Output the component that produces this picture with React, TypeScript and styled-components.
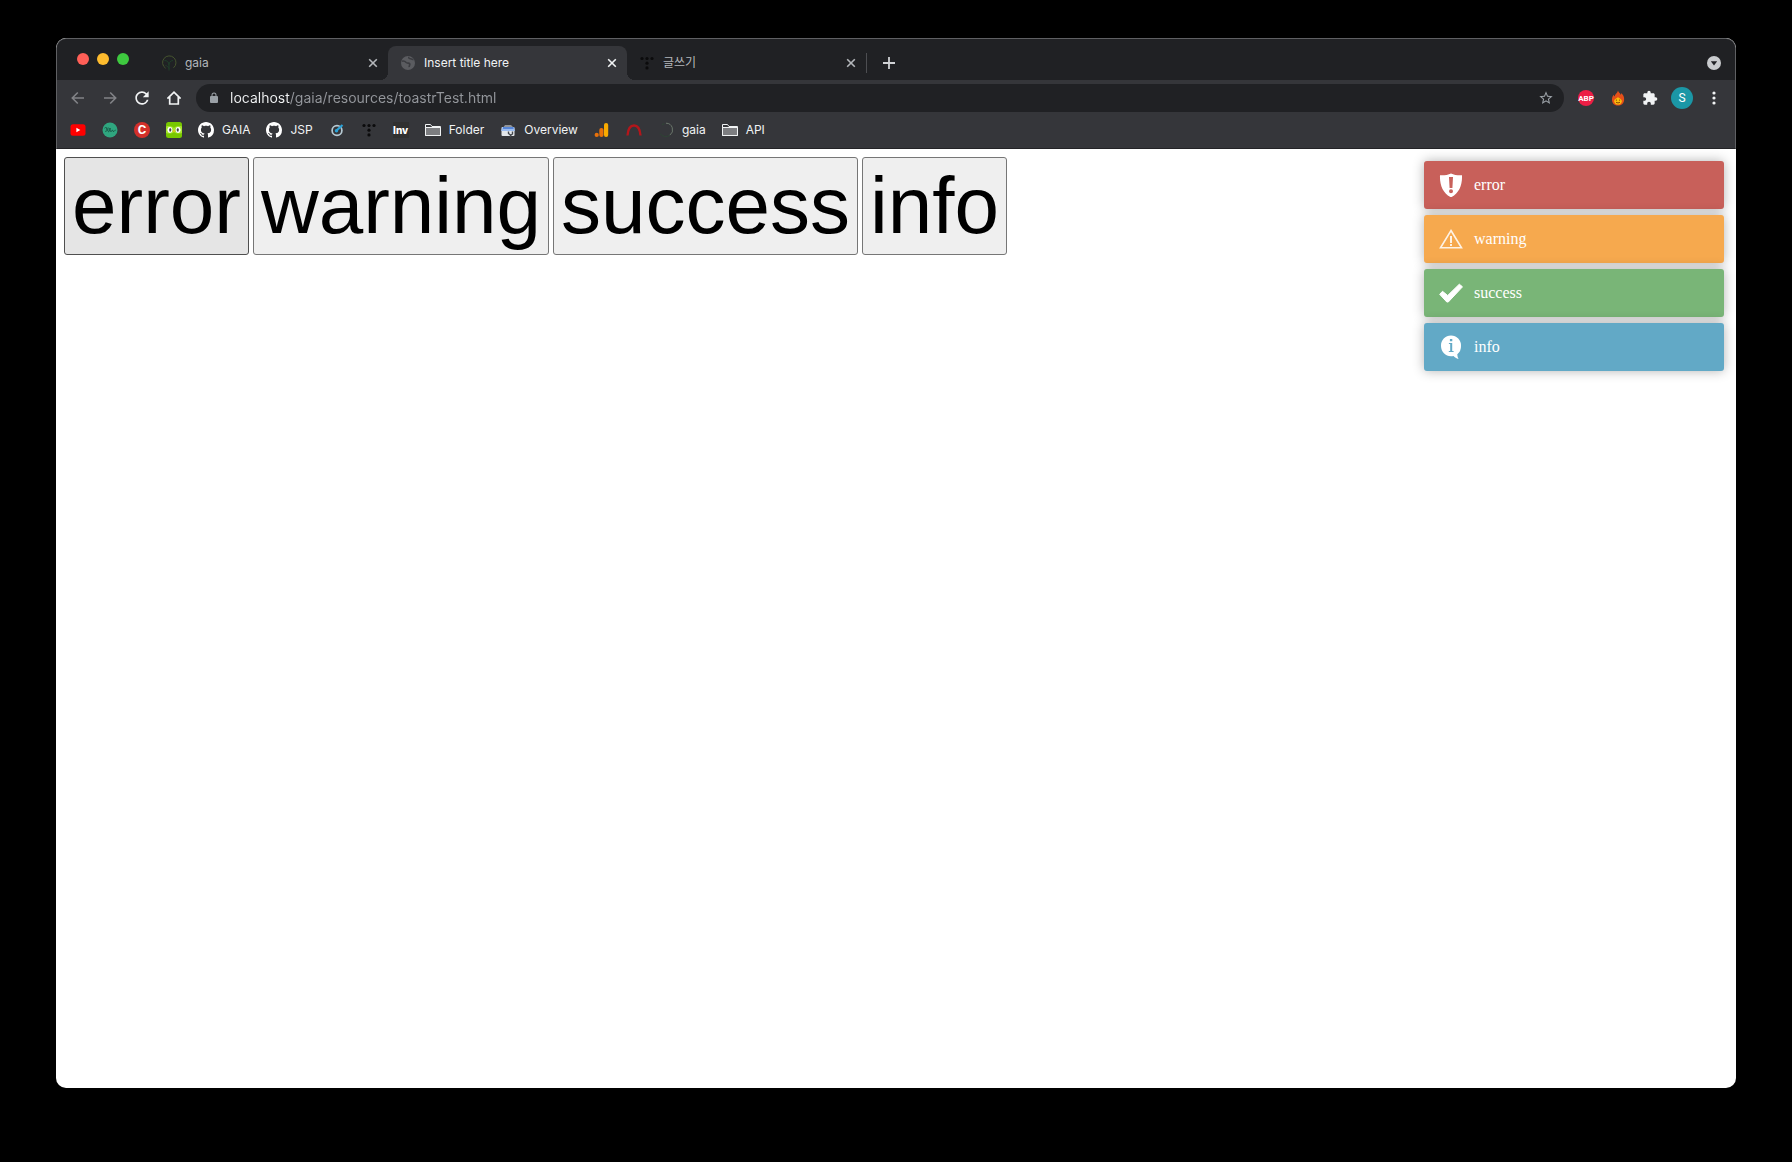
import React, { useState } from "react";
import styled, { createGlobalStyle } from "styled-components";

const ui = `Inter, "Noto Sans CJK KR", sans-serif`;

const GlobalStyle = createGlobalStyle`
  *, *::before, *::after { box-sizing: border-box; }
  body { margin: 0; background: #000; }
  button { font: inherit; color: inherit; cursor: pointer; }
`;

const Desktop = styled.div`
  display: flex;
  min-height: 100vh;
  padding: 38px 56px 74px;
  background: #000;
`;

const BrowserWindow = styled.div`
  flex: 1;
  min-width: 0;
  display: flex;
  flex-direction: column;
  background: #fff;
  border-radius: 10px;
  overflow: hidden;
`;

const BrowserHeader = styled.header`
  border: 1px solid #5f6063;
  border-bottom-color: #232326;
  border-radius: 10px 10px 0 0;
  background: #35363a;
  color: #f1f3f4;
  font-family: ${ui};
  font-size: 12px;
  overflow: hidden;
`;

const TabStrip = styled.div`
  display: flex;
  align-items: flex-end;
  height: 41px;
  padding-left: 20px;
  padding-right: 13px;
  background: #202124;
`;

const WindowControls = styled.div`
  display: flex;
  gap: 8px;
  width: 72px;
  height: 34px;
  padding-top: 7px;
`;

const WindowDot = styled.button<{ $color: string }>`
  width: 12px;
  height: 12px;
  padding: 0;
  border: 0;
  border-radius: 50%;
  background: ${(p) => p.$color};
`;

const TabList = styled.nav`
  display: flex;
`;

const Tab = styled.div<{ $active?: boolean }>`
  position: relative;
  display: flex;
  align-items: center;
  gap: 8px;
  width: 239px;
  height: 34px;
  padding: 0 7px 0 12px;
  border-radius: 8px 8px 0 0;
  background: ${(p) => (p.$active ? "#35363a" : "transparent")};
  color: ${(p) => (p.$active ? "#f1f3f4" : "#b4b7bb")};

  &::before,
  &::after {
    content: "";
    display: ${(p) => (p.$active ? "block" : "none")};
    position: absolute;
    bottom: 0;
    width: 8px;
    height: 8px;
  }
  &::before {
    left: -8px;
    background: radial-gradient(circle at 0 0, transparent 8px, #35363a 8px);
  }
  &::after {
    right: -8px;
    background: radial-gradient(circle at 100% 0, transparent 8px, #35363a 8px);
  }
`;

const TabTitle = styled.a`
  flex: 1;
  color: inherit;
  line-height: 16px;
  text-decoration: none;
  white-space: nowrap;
`;

const PlainButton = styled.button<{ $size?: number }>`
  display: flex;
  align-items: center;
  justify-content: center;
  width: ${(p) => p.$size ?? 16}px;
  height: ${(p) => p.$size ?? 16}px;
  padding: 0;
  border: 0;
  background: none;
`;

const NewTab = styled.div`
  display: flex;
  align-items: center;
  height: 34px;
  color: #d0d2d5;
`;

const TabDivider = styled.span`
  width: 1px;
  height: 20px;
  margin-right: 8px;
  background: #4d4e52;
`;

const TabSearch = styled(NewTab)`
  margin-left: auto;
`;

const Toolbar = styled.div`
  display: flex;
  align-items: center;
  gap: 6px;
  height: 36px;
  padding: 0 5px;
`;

const ToolGroup = styled.div`
  display: flex;
`;

const ToolButton = styled.button<{ $dim?: boolean }>`
  display: flex;
  align-items: center;
  justify-content: center;
  width: 32px;
  height: 28px;
  padding: 0;
  border: 0;
  background: none;
  color: ${(p) => (p.$dim ? "#818286" : "#f1f3f4")};
`;

const AddressBar = styled.form`
  flex: 1;
  display: flex;
  align-items: center;
  gap: 8px;
  height: 28px;
  padding: 0 10px;
  border-radius: 14px;
  background: #202124;
  color: #9aa0a6;
`;

const AddressInput = styled.input`
  flex: 1;
  min-width: 0;
  height: 20px;
  padding: 0 0 2px;
  border: 0;
  outline: 0;
  font-family: ${ui};
  font-size: 14px;
  color: #f1f3f4;
  background: linear-gradient(to right, #f1f3f4 60px, #94979c 60px);
  background-clip: text;
  -webkit-text-fill-color: transparent;
`;

const Round = styled.span<{ $color: string; $size: number; $font: number; $weight?: number }>`
  display: flex;
  align-items: center;
  justify-content: center;
  width: ${(p) => p.$size}px;
  height: ${(p) => p.$size}px;
  border-radius: 50%;
  background: ${(p) => p.$color};
  color: #fff;
  font-family: Roboto, sans-serif;
  font-size: ${(p) => p.$font}px;
  font-weight: ${(p) => p.$weight ?? 400};
`;

const BookmarkBar = styled.nav`
  display: flex;
  align-items: center;
  gap: 16px;
  height: 32px;
  padding: 0 13px 4px;
`;

const Bookmark = styled.a`
  display: flex;
  align-items: center;
  gap: 8px;
  color: #f1f3f4;
  line-height: 16px;
  text-decoration: none;
  white-space: nowrap;
`;

const InvMark = styled.span`
  display: flex;
  align-items: center;
  justify-content: center;
  width: 16px;
  height: 16px;
  background: #303030;
  color: #fff;
  font-size: 10px;
  font-weight: 800;
`;

const Page = styled.main`
  position: relative;
  flex: 1;
  padding: 8px;
`;

const ButtonRow = styled.div`
  display: flex;
  flex-wrap: wrap;
  gap: 4px;
`;

const BigButton = styled.button<{ $hovered?: boolean }>`
  padding: 2px 7px;
  border: 1px solid ${(p) => (p.$hovered ? "#4f4f4f" : "#767676")};
  border-radius: 3px;
  background: ${(p) => (p.$hovered ? "#e5e5e5" : "#efefef")};
  color: #000;
  font-family: "Liberation Sans", Arial, sans-serif;
  font-size: 80px;
  line-height: 92px;
`;

const ToastStack = styled.div`
  position: absolute;
  top: 12px;
  right: 12px;
  display: grid;
  gap: 6px;
  width: 300px;
`;

const ToastBox = styled.div<{ $color: string }>`
  display: flex;
  align-items: center;
  gap: 11px;
  height: 48px;
  padding: 0 15px;
  border-radius: 3px;
  background: ${(p) => p.$color};
  box-shadow: 0 0 12px rgba(0, 0, 0, 0.3);
  color: #fff;
  font-family: "Liberation Serif", "Times New Roman", serif;
  font-size: 16px;
  line-height: 18px;
`;

const CloseIcon = () => (
  <svg width="10" height="10" viewBox="0 0 10 10" fill="none" stroke="currentColor" strokeWidth="1.6">
    <path d="M1.2 1.2l7.6 7.6M8.8 1.2L1.2 8.8" />
  </svg>
);

const MaterialIcon = ({ d, size = 16 }: { d: string; size?: number }) => (
  <svg width={size} height={size} viewBox="0 0 24 24" fill="currentColor">
    <path d={d} />
  </svg>
);

const icons = {
  reload:
    "M17.65 6.35A7.958 7.958 0 0012 4c-4.42 0-7.99 3.58-7.99 8s3.57 8 7.99 8c3.73 0 6.84-2.55 7.73-6h-2.08A5.99 5.99 0 0112 18c-3.31 0-6-2.69-6-6s2.69-6 6-6c1.66 0 3.14.69 4.22 1.78L13 11h7V4l-2.35 2.35z",
  star: "M22 9.24l-7.19-.62L12 2 9.19 8.63 2 9.24l5.46 4.73L5.82 21 12 17.27 18.18 21l-1.63-7.03L22 9.24zM12 15.4l-3.76 2.27 1-4.28-3.32-2.88 4.38-.38L12 6.1l1.71 4.04 4.38.38-3.32 2.88 1 4.28L12 15.4z",
  lock: "M18 8h-1V6A5 5 0 007 6v2H6a2 2 0 00-2 2v10a2 2 0 002 2h12a2 2 0 002-2V10a2 2 0 00-2-2zM9 6a3 3 0 016 0v2H9z",
  puzzle:
    "M20.5 11H19V7c0-1.1-.9-2-2-2h-4V3.5a2.5 2.5 0 00-5 0V5H4c-1.1 0-1.99.9-1.99 2v3.8H3.5c1.49 0 2.7 1.21 2.7 2.7s-1.21 2.7-2.7 2.7H2V20c0 1.1.9 2 2 2h3.8v-1.5c0-1.49 1.21-2.7 2.7-2.7s2.7 1.21 2.7 2.7V22H17c1.1 0 2-.9 2-2v-4h1.5a2.5 2.5 0 000-5z",
};

const ArrowIcon = ({ right }: { right?: boolean }) => (
  <svg width="14" height="14" viewBox="0 0 14 14" fill="none" stroke="currentColor" strokeWidth="1.6">
    <path d={right ? "M1 7h11.5M7.2 1.5L12.7 7l-5.5 5.5" : "M13 7H1.5M6.8 1.5L1.3 7l5.5 5.5"} />
  </svg>
);

const HomeIcon = () => (
  <svg width="16" height="16" viewBox="0 0 16 16" fill="none" stroke="currentColor" strokeWidth="1.7">
    <path d="M1.4 8.6L8 2.1l6.6 6.5M3.7 7v7h8.6V7" />
  </svg>
);

const FlameIcon = () => (
  <svg width="16" height="16" viewBox="0 0 16 16">
    <path d="M8 .5c.3 2 2.3 2.3 2.6 4.2.6-.3.7-1 .6-1.7 2 1.7 3.3 4 2.9 7.2-.4 3.300-2.900 5.300-6.100 5.300S2.300 13.500 2 10.200c-.2-2.300.6-4 1.900-5.400 0 .8.3 1.300.8 1.600C4.900 3.900 7.600 3.200 8 .5z" fill="#e4501a" />
    <path d="M8 7c.8 1 1.700 1.300 2.600 1.900 1.200.8 1.500 1.900 1.100 3.100-.5 1.600-1.900 2.600-3.700 2.600s-3.200-1-3.700-2.600c-.4-1.300 0-2.400 1.100-3.100C6.300 8.300 7.200 8 8 7z" fill="#f9bd0b" />
    <path d="M6.400 9.600v1.100M9.600 9.600v1.100M6 12.200c1.200.9 2.800.9 4 0" stroke="#7a3a05" fill="none" strokeWidth=".9" />
  </svg>
);

const MenuIcon = () => (
  <svg width="16" height="16" viewBox="0 0 16 16" fill="currentColor">
    <circle cx="8" cy="3" r="1.6" />
    <circle cx="8" cy="8" r="1.6" />
    <circle cx="8" cy="13" r="1.6" />
  </svg>
);

const LeafRing = ({ faint }: { faint?: boolean }) => (
  <svg width="16" height="16" viewBox="0 0 16 16" fill="none">
    {faint ? (
      <>
        <path d="M8 1.200a6.600 6.600 0 013.800 12" stroke="#6b776c" />
        <path d="M11.800 13.200A6.800 6.800 0 012 11.500M4 2.800l2.500-1.400" stroke="#2f4535" />
      </>
    ) : (
      <>
        <path d="M4.600 13.200A6.700 6.700 0 1112.500 12.800" stroke="#46552f" />
        <path d="M3.500 5.500c3 0 4.200 1.500 4.500 4.500M8 15.500V9.500c.4-2.500 1.500-3.700 4-4M4.500 10.500c1.500.300 2.500 1.200 3.500 3" stroke="#20402b" />
      </>
    )}
  </svg>
);

const GlobeIcon = () => (
  <svg width="16" height="16" viewBox="0 0 16 16">
    <circle cx="8" cy="8" r="7" fill="#5b5c60" />
    <path d="M2 6.200c2-.6 3.200.2 4.200 1.300 1 1 2.800.3 3.500 1.300.7 1-.8 2-.5 3.400M9 2c-.6 1 .3 1.800 1.500 1.800 1.400 0 1.800.8 3 .8" stroke="#3b3c40" strokeWidth="1.6" fill="none" />
  </svg>
);

const DotsT = () => (
  <svg width="16" height="16" viewBox="0 0 16 16" fill="#0b0b0c">
    <circle cx="3" cy="3.5" r="1.6" />
    <circle cx="8" cy="3.5" r="1.6" />
    <circle cx="13" cy="3.5" r="1.6" />
    <circle cx="8" cy="8.2" r="1.6" />
    <circle cx="8" cy="12.9" r="1.6" />
  </svg>
);

const YoutubeIcon = () => (
  <svg width="16" height="16" viewBox="0 0 16 16">
    <rect x=".5" y="2.3" width="15" height="11.4" rx="2.5" fill="#f00" />
    <path d="M6.400 5.800v4.400L10.300 8z" fill="#fff" />
  </svg>
);

const ScribbleIcon = () => (
  <svg width="16" height="16" viewBox="0 0 16 16" fill="none">
    <circle cx="8" cy="8" r="7.5" fill="#2fa67f" />
    <path d="M2.500 6.200c1.500-1.500 3-.5 1.700.9 2 .2.600 2.700-1 2.200M6.200 5.500c-.7 2-.5 4 .3 4.200 1 .1 1.300-2 1.500-3.700 0 2.300.2 3.600 1 3.600s1.200-1.600 1.500-1.600c.6 0 0 1.500 1 1.500.8 0 .9-1.300 2.200-1.400" stroke="#174f41" strokeWidth=".9" />
  </svg>
);

const OwlIcon = () => (
  <svg width="16" height="16" viewBox="0 0 16 16">
    <rect width="16" height="16" rx="2.5" fill="#78c800" />
    <path d="M0 4.500C3 3.500 6 4 8 6c2-2 5-2.500 8-1.500V11c-3 1-6 .8-8-1-2 1.800-5 2-8 1z" fill="#a5e52c" />
    <rect x="1.5" y="5" width="4.8" height="6" rx="2.4" fill="#fff" />
    <rect x="9.7" y="5" width="4.8" height="6" rx="2.4" fill="#fff" />
    <rect x="3.3" y="6.3" width="1.9" height="3.3" rx=".9" fill="#444" />
    <rect x="10.8" y="6.3" width="1.9" height="3.3" rx=".9" fill="#444" />
    <path d="M6.700 8.500h2.600L8 10.500z" fill="#ffb020" />
  </svg>
);

const GithubIcon = () => (
  <svg width="16" height="16" viewBox="0 0 16 16" fill="#fff">
    <path d="M8 0C3.580 0 0 3.580 0 8c0 3.540 2.290 6.530 5.470 7.590.4.07.55-.17.55-.38 0-.19-.01-.82-.01-1.490-2.010.37-2.530-.49-2.690-.94-.09-.23-.48-.94-.82-1.130-.28-.15-.68-.52-.01-.53.63-.01 1.080.58 1.230.82.72 1.210 1.870.87 2.330.66.07-.52.28-.87.51-1.070-1.780-.2-3.640-.89-3.640-3.950 0-.87.31-1.590.82-2.150-.08-.2-.36-1.020.08-2.120 0 0 .67-.21 2.200.82.64-.18 1.320-.27 2-.27.68 0 1.360.09 2 .27 1.530-1.040 2.200-.82 2.200-.82.44 1.100.16 1.920.08 2.120.51.56.82 1.270.82 2.150 0 3.070-1.870 3.750-3.650 3.950.29.25.54.73.54 1.480 0 1.070-.01 1.930-.01 2.200 0 .21.15.46.55.38A8.013 8.013 0 0016 8c0-4.420-3.580-8-8-8z" />
  </svg>
);

const DialIcon = () => (
  <svg width="16" height="16" viewBox="0 0 16 16" fill="none">
    <circle cx="8" cy="8.5" r="4.9" stroke="#b6c9d3" strokeWidth="1.7" />
    <path d="M7 9l6.500-6" stroke="#2ba3d8" strokeWidth="2.2" />
    <circle cx="7.5" cy="8.8" r="1.7" fill="#2ba3d8" />
  </svg>
);

const FolderIcon = () => (
  <svg width="16" height="16" viewBox="0 0 16 16" stroke="#f1f3f4">
    <path d="M.5 13.500v-11h5l1.500 2h8.500v9z" fill="#35363a" />
    <path d="M.5 5.500h15v8H.5z" fill="#7d7e81" />
  </svg>
);

const OverviewIcon = () => (
  <svg width="16" height="16" viewBox="0 0 16 16">
    <path d="M3.500 5L5 3h6l2 2z" fill="#8f9399" />
    <rect x="1.5" y="5" width="13" height="9" rx="1" fill="#e3e6ea" />
    <path d="M2.500 5h11.300L15 9H1z" fill="#9bbcf0" />
    <path d="M3 6h10.500" stroke="#3f74d2" strokeWidth="1.4" />
    <path d="M8.500 9.500v2l2 1.500V15M12.500 9.500V12l-2 1.500" stroke="#44484e" strokeWidth="1.4" fill="none" />
  </svg>
);

const AnalyticsIcon = () => (
  <svg width="16" height="16" viewBox="0 0 16 16">
    <rect x="10" y="1" width="4.2" height="14" rx="2" fill="#f9ab00" />
    <rect x="5.3" y="6" width="4.2" height="9" rx="2" fill="#e8710a" />
    <circle cx="2.7" cy="12.9" r="2.1" fill="#e8710a" />
  </svg>
);

const ArchIcon = () => (
  <svg width="16" height="16" viewBox="0 0 16 16" fill="none" stroke="#b3161b" strokeWidth="2.4">
    <path d="M1.500 13.500C2 7 4.500 3.500 8 3.500S14 7 14.500 13.500" />
  </svg>
);

const ToastIcon = ({ kind }: { kind: string }) => (
  <svg width="24" height="24" viewBox="0 0 24 24" fill="#fff">
    {kind === "error" && (
      <path
        fillRule="evenodd"
        d="M12 .5c3 1.500 7 2 11 1.800.5 9.500-3 18.500-11 22C4 20.800.5 11.800 1 2.300 5 2.500 9 2 12 .5zM10 4l.6 11h2.800L14 4zm2 12.200a2 2 0 100 4 2 2 0 000-4z"
      />
    )}
    {kind === "warning" && (
      <g fill="none" stroke="#fff" strokeWidth="1.6" opacity=".85">
        <path d="M12 3.500L22.500 20.800H1.500z" />
        <path d="M12 9v7M12 17v2" strokeWidth="2" />
      </g>
    )}
    {kind === "success" && (
      <path d="M.7 13.300l2.800-3 5.200 4.200L20.300 3.200l3.200 2.600L9.300 21H7.800z" stroke="#fff" strokeLinejoin="round" />
    )}
    {kind === "info" && (
      <path
        fillRule="evenodd"
        d="M12 .5A10 10 0 002 11c0 5.800 4.500 10.300 10 10.300.9 0 1.700-.1 2.500-.3 1.300 1.400 2.900 2.500 5 3-.8-1.500-1.200-3-1.200-4.700A10.300 10.300 0 0022 11 10 10 0 0012 .5zM10.900 4h2.400v2.300h-2.400zM9.900 8h3.300v8h1.400v1H9.800v-1h1.400V9H9.900z"
      />
    )}
  </svg>
);

const toasts = [
  { kind: "error", color: "#c8605a" },
  { kind: "warning", color: "#f6a94e" },
  { kind: "success", color: "#79b577" },
  { kind: "info", color: "#62a9c6" },
];

const tabs = [
  { title: "gaia", icon: <LeafRing /> },
  { title: "Insert title here", icon: <GlobeIcon />, active: true },
  { title: "글쓰기", icon: <DotsT /> },
];

const bookmarks: { name: string; label?: string; icon: React.ReactNode }[] = [
  { name: "YouTube", icon: <YoutubeIcon /> },
  { name: "Notes", icon: <ScribbleIcon /> },
  { name: "C", icon: <Round $color="#d3302a" $size={16} $font={13} $weight={700}>C</Round> },
  { name: "Duolingo", icon: <OwlIcon /> },
  { name: "GAIA", label: "GAIA", icon: <GithubIcon /> },
  { name: "JSP", label: "JSP", icon: <GithubIcon /> },
  { name: "Dial", icon: <DialIcon /> },
  { name: "Tistory", icon: <DotsT /> },
  { name: "Inv", icon: <InvMark>Inv</InvMark> },
  { name: "Folder", label: "Folder", icon: <FolderIcon /> },
  { name: "Overview", label: "Overview", icon: <OverviewIcon /> },
  { name: "Analytics", icon: <AnalyticsIcon /> },
  { name: "Arch", icon: <ArchIcon /> },
  { name: "gaia", label: "gaia", icon: <LeafRing faint /> },
  { name: "API", label: "API", icon: <FolderIcon /> },
];

export default function App() {
  const [address, setAddress] = useState("localhost/gaia/resources/toastrTest.html");

  return (
    <>
      <GlobalStyle />
      <Desktop>
        <BrowserWindow>
          <BrowserHeader>
            <TabStrip>
              <WindowControls>
                <WindowDot $color="#ff5f57" aria-label="Close window" />
                <WindowDot $color="#febc2e" aria-label="Minimize window" />
                <WindowDot $color="#3ec93f" aria-label="Zoom window" />
              </WindowControls>
              <TabList aria-label="Tabs">
                {tabs.map((tab) => (
                  <Tab key={tab.title} $active={tab.active}>
                    {tab.icon}
                    <TabTitle href="#">{tab.title}</TabTitle>
                    <PlainButton aria-label="Close tab">
                      <CloseIcon />
                    </PlainButton>
                  </Tab>
                ))}
              </TabList>
              <NewTab>
                <TabDivider />
                <PlainButton $size={28} aria-label="New tab">
                  <svg width="12" height="12" viewBox="0 0 12 12" stroke="currentColor" strokeWidth="1.8">
                    <path d="M6 0v12M0 6h12" />
                  </svg>
                </PlainButton>
              </NewTab>
              <TabSearch>
                <PlainButton aria-label="Search tabs">
                  <svg width="14" height="14" viewBox="0 0 14 14">
                    <circle cx="7" cy="7" r="7" fill="#c9cbce" />
                    <path d="M3.800 5.200h6.400L7 9.500z" fill="#202124" />
                  </svg>
                </PlainButton>
              </TabSearch>
            </TabStrip>
            <Toolbar>
              <ToolGroup>
                <ToolButton $dim aria-label="Back"><ArrowIcon /></ToolButton>
                <ToolButton $dim aria-label="Forward"><ArrowIcon right /></ToolButton>
                <ToolButton aria-label="Reload"><MaterialIcon d={icons.reload} size={20} /></ToolButton>
                <ToolButton aria-label="Home"><HomeIcon /></ToolButton>
              </ToolGroup>
              <AddressBar onSubmit={(e) => e.preventDefault()}>
                <PlainButton type="button" aria-label="Site information">
                  <MaterialIcon d={icons.lock} size={12} />
                </PlainButton>
                <AddressInput
                  aria-label="Address"
                  value={address}
                  onChange={(e) => setAddress(e.target.value)}
                />
                <PlainButton type="button" aria-label="Bookmark this page">
                  <MaterialIcon d={icons.star} size={18} />
                </PlainButton>
              </AddressBar>
              <ToolGroup>
                <ToolButton aria-label="Adblock Plus">
                  <Round $color="#ed1e45" $size={16} $font={8} $weight={700}>ABP</Round>
                </ToolButton>
                <ToolButton aria-label="Flame"><FlameIcon /></ToolButton>
                <ToolButton aria-label="Extensions"><MaterialIcon d={icons.puzzle} /></ToolButton>
                <ToolButton aria-label="Profile">
                  <Round $color="#1b97a6" $size={22} $font={12}>S</Round>
                </ToolButton>
                <ToolButton aria-label="Menu"><MenuIcon /></ToolButton>
              </ToolGroup>
            </Toolbar>
            <BookmarkBar aria-label="Bookmarks">
              {bookmarks.map((b) => (
                <Bookmark key={b.name} href="#" aria-label={b.name}>
                  {b.icon}
                  {b.label && <span>{b.label}</span>}
                </Bookmark>
              ))}
            </BookmarkBar>
          </BrowserHeader>
          <Page>
            <ButtonRow>
              {toasts.map(({ kind }) => (
                <BigButton key={kind} $hovered={kind === "error"}>{kind}</BigButton>
              ))}
            </ButtonRow>
            <ToastStack role="status">
              {toasts.map(({ kind, color }) => (
                <ToastBox key={kind} $color={color}>
                  <ToastIcon kind={kind} />
                  <span>{kind}</span>
                </ToastBox>
              ))}
            </ToastStack>
          </Page>
        </BrowserWindow>
      </Desktop>
    </>
  );
}
